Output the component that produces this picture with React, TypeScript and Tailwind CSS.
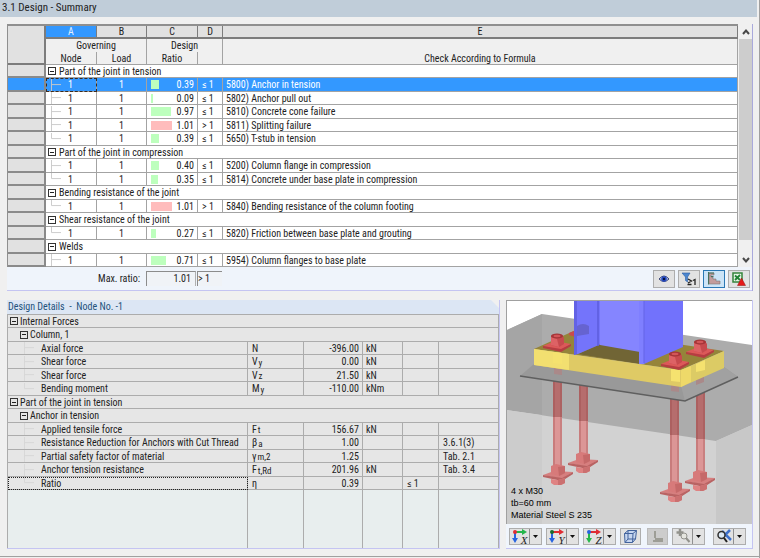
import type { ReactNode } from "react";

type CheckRow = { ratio: string; sign: string; text: string; bar: number; fail?: boolean; selected?: boolean };
type CheckGroup = { title: string; open?: boolean; rows: CheckRow[] };
type DetailRow = { level: number; label: string; symbol?: string; sub?: string; value?: string; unit?: string; limit?: string; note?: string; last?: boolean; focused?: boolean };

const groups: CheckGroup[] = [
    {
        title: "Part of the joint in tension",
        rows: [
            { ratio: "0.39", sign: "≤ 1", text: "5800) Anchor in tension", bar: 8, selected: true },
            { ratio: "0.09", sign: "≤ 1", text: "5802) Anchor pull out", bar: 2 },
            { ratio: "0.97", sign: "≤ 1", text: "5810) Concrete cone failure", bar: 20 },
            { ratio: "1.01", sign: "> 1", text: "5811) Splitting failure", bar: 21, fail: true },
            { ratio: "0.39", sign: "≤ 1", text: "5650) T-stub in tension", bar: 8 },
        ],
    },
    {
        title: "Part of the joint in compression",
        rows: [
            { ratio: "0.40", sign: "≤ 1", text: "5200) Column flange in compression", bar: 8 },
            { ratio: "0.35", sign: "≤ 1", text: "5814) Concrete under base plate in compression", bar: 7 },
        ],
    },
    {
        title: "Bending resistance of the joint",
        rows: [{ ratio: "1.01", sign: "> 1", text: "5840) Bending resistance of the column footing", bar: 21, fail: true }],
    },
    {
        title: "Shear resistance of the joint",
        rows: [{ ratio: "0.27", sign: "≤ 1", text: "5820) Friction between base plate and grouting", bar: 5 }],
    },
    {
        title: "Welds",
        open: true,
        rows: [{ ratio: "0.71", sign: "≤ 1", text: "5954) Column flanges to base plate", bar: 15 }],
    },
];

const details: DetailRow[] = [
    { level: 0, label: "Internal Forces" },
    { level: 1, label: "Column, 1" },
    { level: 2, label: "Axial force", symbol: "N", value: "-396.00", unit: "kN" },
    { level: 2, label: "Shear force", symbol: "V", sub: "y", value: "0.00", unit: "kN" },
    { level: 2, label: "Shear force", symbol: "V", sub: "z", value: "21.50", unit: "kN" },
    { level: 2, label: "Bending moment", symbol: "M", sub: "y", value: "-110.00", unit: "kNm", last: true },
    { level: 0, label: "Part of the joint in tension" },
    { level: 1, label: "Anchor in tension" },
    { level: 2, label: "Applied tensile force", symbol: "F", sub: "t", value: "156.67", unit: "kN" },
    { level: 2, label: "Resistance Reduction for Anchors with Cut Thread", symbol: "β", sub: "a", value: "1.00", note: "3.6.1(3)" },
    { level: 2, label: "Partial safety factor of material", symbol: "γ", sub: "m,2", value: "1.25", note: "Tab. 2.1" },
    { level: 2, label: "Anchor tension resistance", symbol: "F", sub: "t,Rd", value: "201.96", unit: "kN", note: "Tab. 3.4" },
    { level: 2, label: "Ratio", symbol: "η", value: "0.39", limit: "≤ 1", last: true, focused: true },
];

function Toggle({ label }: { label: string }) {
    return (
        <button aria-label={`Collapse ${label}`} className="w-2 h-2 shrink-0 border border-[#333] flex items-center justify-center">
            <span className="block w-1 h-px bg-[#222]"></span>
        </button>
    );
}

function Branch({ last }: { last?: boolean }) {
    return (
        <svg className="w-3 h-full shrink-0" viewBox="0 0 12 14" preserveAspectRatio="none" fill="none" stroke="#c9c9c9" shapeRendering="crispEdges">
            <path d={last ? "M1.5 0V6.5H11" : "M1.5 0V14M1.5 6.5H11"} />
        </svg>
    );
}

function SummaryTable() {
    const cell = "border-r border-b border-[#a3a3a3] p-0";
    const letter = "h-[13px] p-0 border-r border-b-2 border-[#7c7c7c] font-normal";
    return (
        <table className="w-full table-fixed border-separate border-spacing-0 border-t-2 border-l border-[#8f8f8f] bg-white leading-[11px]">
            <colgroup>
                <col className="w-[38px]" />
                <col className="w-[51px]" />
                <col className="w-[50px]" />
                <col className="w-[51px]" />
                <col className="w-[25px]" />
                <col />
            </colgroup>
            <thead className="bg-[#f0f0f0]">
                <tr className="bg-[#e1e1e1]">
                    <td rowSpan={3} className="bg-[#e1e1e1] border-r-2 border-b-2 border-[#7c7c7c] p-0"></td>
                    <th className={`${letter} bg-[#3398ff] text-[#e3f0ff]`}>A</th>
                    <th className={letter}>B</th>
                    <th className={letter}>C</th>
                    <th className={letter}>D</th>
                    <th className={letter}>E</th>
                </tr>
                <tr>
                    <th colSpan={2} className="h-[13px] p-0 font-normal border-r border-[#a3a3a3]">Governing</th>
                    <th colSpan={2} className="h-[13px] p-0 font-normal border-r border-[#a3a3a3]">Design</th>
                    <th rowSpan={2} className={`${cell} font-normal align-bottom`}>Check According to Formula</th>
                </tr>
                <tr>
                    <th className={`${cell} h-[13px] font-normal`}>Node</th>
                    <th className={`${cell} h-[13px] font-normal`}>Load</th>
                    <th className={`${cell} h-[13px] font-normal`}>Ratio</th>
                    <th className={`${cell} h-[13px]`}></th>
                </tr>
            </thead>
            <tbody>
                {groups.flatMap((g) => [
                    <tr key={g.title} className="h-[13px] even:h-[14px]">
                        <td className="bg-[#e1e1e1] border-r-2 border-b-2 border-[#8a8a8a] p-0"></td>
                        <td colSpan={5} className={cell}>
                            <div className="flex items-center gap-[3px] pl-[2px] h-[11px]">
                                <Toggle label={g.title} />
                                <span>{g.title}</span>
                            </div>
                        </td>
                    </tr>,
                    ...g.rows.map((r, i) => (
                        <tr key={g.title + i} className={`h-[13px] even:h-[14px] ${r.selected ? "bg-[#3398ff] text-white" : ""}`}>
                            <td className={`border-r-2 border-b-2 border-[#8a8a8a] p-0 ${r.selected ? "bg-[#3398ff]" : "bg-[#e1e1e1]"}`}></td>
                            <td className={`${cell} ${r.selected ? "outline-1 -outline-offset-1 outline-dashed outline-[#3d2a1c]" : ""}`}>
                                <div className="flex items-center h-3 pl-1">
                                    <Branch last={i === g.rows.length - 1 && !g.open} />
                                    <span className="pl-1.5">1</span>
                                </div>
                            </td>
                            <td className={`${cell} text-center`}>1</td>
                            <td className={cell}>
                                <div className="flex items-center justify-between pl-1 pr-[3px]">
                                    <span className={`h-[9px] ${r.fail ? "bg-[#ffbcbc]" : "bg-[#bdffbd]"}`} style={{ width: r.bar }}></span>
                                    <span>{r.ratio}</span>
                                </div>
                            </td>
                            <td className={`${cell} pl-1`}>{r.sign}</td>
                            <td className={`${cell} pl-[3px]`}>{r.text}</td>
                        </tr>
                    )),
                ])}
            </tbody>
        </table>
    );
}

function ScrollBar() {
    return (
        <div className="w-[13px] ml-px flex flex-col bg-[#f0f0f0]">
            <button aria-label="Scroll up" className="h-[15px] flex items-center justify-center">
                <svg className="w-2 h-2" viewBox="0 0 8 8" fill="none" stroke="#484848" strokeWidth="2"><path d="M1 6L4 2.5L7 6" /></svg>
            </button>
            <div className="flex-1 bg-[#cdcdcd] mb-3"></div>
            <button aria-label="Scroll down" className="h-[15px] flex items-center justify-center">
                <svg className="w-2 h-2" viewBox="0 0 8 8" fill="none" stroke="#484848" strokeWidth="2"><path d="M1 2L4 5.5L7 2" /></svg>
            </button>
        </div>
    );
}

function IconButton({ label, active, children }: { label: string; active?: boolean; children: ReactNode }) {
    return (
        <button aria-label={label} className={`w-[22px] h-[18px] border flex items-center justify-center ${active ? "bg-[#cce4f7] border-[#2b78b4]" : "bg-[#e2e2e2] border-[#adadad]"}`}>
            {children}
        </button>
    );
}

function SummaryFooter() {
    return (
        <div className="flex items-center h-6 bg-[#eff4fb] border-b border-[#c4c4f2] pr-[2px]">
            <span className="w-[139px] pr-1.5 text-right">Max. ratio:</span>
            <output className="w-[50px] h-[15px] leading-[14px] pr-1 text-right border-t border-l border-r border-t-[#8c8c8c] border-l-[#8c8c8c] border-r-[#b0b0b0] bg-[#f0f3f7]">1.01</output>
            <output className="w-[25px] h-[15px] ml-px leading-[14px] border-t border-l border-t-[#8c8c8c] border-l-[#8c8c8c] bg-[#f0f3f7]">&gt; 1</output>
            <div className="ml-auto flex gap-[3px]">
                <IconButton label="Show">
                    <svg className="w-3 h-3" viewBox="0 0 12 12">
                        <path d="M1 6Q6 0 11 6Q6 11 1 6Z" fill="#b9c8f0" stroke="#3a4674" />
                        <circle cx="6" cy="6" r="2.8" fill="#274bc0" />
                        <circle cx="6" cy="6" r="1.2" fill="#06103c" />
                    </svg>
                </IconButton>
                <IconButton label="Filter ratios above 1">
                    <svg className="w-4 h-4 shrink-0" viewBox="0 0 16 16">
                        <path d="M1 2H9L6.500 6V11L4.500 9.500V6Z" fill="#4d87cf" stroke="#2a5ca3" strokeWidth=".6" />
                        <path d="M7 8L10.500 10L7 12M6.500 13.500H10.500M12 9.500L14 8.500V14" fill="none" stroke="#222" strokeWidth="1.300" />
                    </svg>
                </IconButton>
                <IconButton label="Show ratio bars" active>
                    <svg className="w-[14px] h-[14px]" viewBox="0 0 14 14">
                        <path d="M2 1H7V3H4V5H6V7H9V9H13V12H2Z" fill="#c39c9c" stroke="#777" strokeWidth=".6" />
                        <path d="M1.500 0V12.500M1.500 1H7M4 4.500H6.500" stroke="#47705c" fill="none" />
                    </svg>
                </IconButton>
                <IconButton label="Export to Excel">
                    <svg className="w-[14px] h-[14px]" viewBox="0 0 14 14">
                        <rect x="1" y="1" width="9" height="9" fill="#e9f5e6" stroke="#34843b" strokeWidth="1.500" />
                        <path d="M3 3.500L8 8M8 3L3 8" stroke="#238335" strokeWidth="1.800" />
                        <path d="M9.500 6L13.500 13.500H5.500Z" fill="#e51919" stroke="#901010" strokeWidth=".5" />
                    </svg>
                </IconButton>
            </div>
        </div>
    );
}

function DetailsTable() {
    const cell = "border-r border-b border-[#acacac] p-0";
    return (
        <section className="flex-1 flex flex-col border-r border-b border-[#c4c4f2]">
            <h2 className="h-[14px] leading-[14px] pl-px bg-[#dce6f4] text-[#23527c] font-normal [clip-path:polygon(0_0,calc(100%_-_8px)_0,100%_8px,100%_100%,0_100%)]">Design Details&nbsp; -&nbsp; Node No. -1</h2>
            <div className="flex-1 flex">
                <table className="flex-1 w-full h-full table-fixed border-separate border-spacing-0 border-t border-l border-[#acacac] bg-[#e6e6e6] leading-[11px]">
                    <colgroup>
                        <col />
                        <col className="w-14" />
                        <col className="w-[59px]" />
                        <col className="w-10" />
                        <col className="w-9" />
                        <col className="w-[60px]" />
                    </colgroup>
                    <tbody>
                        {details.map((d, i) =>
                            d.level < 2 ? (
                                <tr key={i} className="h-[13px] even:h-[14px]">
                                    <td colSpan={6} className={cell}>
                                        <div className={`flex items-center gap-[2px] h-[11px] ${d.level ? "pl-3" : "pl-[2px]"}`}>
                                            <Toggle label={d.label} />
                                            <span>{d.label}</span>
                                        </div>
                                    </td>
                                </tr>
                            ) : (
                                <tr key={i} className="h-[13px] even:h-[14px]">
                                    <td className={`${cell} ${d.focused ? "outline-1 -outline-offset-1 outline-dotted outline-[#222]" : ""}`}>
                                        <div className="flex items-center h-3 pl-[15px] whitespace-nowrap">
                                            <span className="opacity-50 h-full"><Branch last={d.last} /></span>
                                            <span className="pl-1.5">{d.label}</span>
                                        </div>
                                    </td>
                                    <td className={`${cell} pl-1`}>
                                        <div className="flex items-center h-3">
                                            {d.symbol}
                                            <span className="text-[9px] leading-[9px] pt-[3px] pl-px">{d.sub}</span>
                                        </div>
                                    </td>
                                    <td className={`${cell} pr-[3px] text-right`}>{d.value}</td>
                                    <td className={`${cell} pl-[3px]`}>{d.unit}</td>
                                    <td className={`${cell} pl-1`}>{d.limit}</td>
                                    <td className={`${cell} pl-1`}>{d.note}</td>
                                </tr>
                            ),
                        )}
                        <tr className="bg-[#e8eeee]">
                            {[0, 1, 2, 3, 4, 5].map((n) => (
                                <td key={n} className="border-r border-[#acacac] p-0"></td>
                            ))}
                        </tr>
                    </tbody>
                </table>
            </div>
        </section>
    );
}

function TopBolt({ x, y }: { x: number; y: number }) {
    return (
        <g transform={`translate(${x} ${y})`}>
            <path d="M-14 4L-2 -1L14 2L4 8Z" fill="#dc5959" />
            <path d="M-14 4L4 7L14 2V4L4 10L-14 6Z" fill="#b63d42" />
            <path d="M-6 -6L-2 -8L5 -7L7 -4V2L2 5L-6 3Z" fill="#c74a4e" />
            <path d="M-6 -5L0 -3L2 5L-6 3Z" fill="#dd6265" />
            <ellipse cx="0" cy="-6" rx="6" ry="2.500" fill="#a53538" />
            <ellipse cx="0" cy="-6" rx="3.500" ry="1.200" fill="#d35659" />
        </g>
    );
}

function BottomNut({ x, y }: { x: number; y: number }) {
    return (
        <g transform={`translate(${x} ${y})`}>
            <path d="M-15 1L-4 -3L15 -2L4 5Z" fill="#d67f7f" />
            <path d="M-15 1L4 4L15 -2V0L4 7L-15 3Z" fill="#b96363" />
            <path d="M-7 -8L-2 -10L7 -8V-1L2 2L-7 0Z" fill="#d77a7a" />
            <path d="M0 -7L7 -8V-1L1 2Z" fill="#c56969" />
            <path d="M-7 5L0 6L7 4V9L3 11H-4L-7 9Z" fill="#df8383" />
            <path d="M0 6L7 4V9L3 11H0Z" fill="#cb7070" />
        </g>
    );
}

function Rod({ x, top, split, bottom }: { x: number; top: number; split: number; bottom: number }) {
    return (
        <g>
            <rect x={x - 4} y={top} width="9" height={bottom - top} fill="#dc9696" />
            <rect x={x - 4} y={top} width="2" height={bottom - top} fill="#c87c7c" />
            <rect x={x + 3} y={top} width="2" height={bottom - top} fill="#c98080" />
            <rect x={x - 4} y={top} width="9" height={split - top} fill="#8f4444" fillOpacity=".5" />
        </g>
    );
}

function JointView() {
    return (
        <svg className="block w-full h-full" viewBox="507 301 245 223" preserveAspectRatio="xMidYMid slice" role="img" aria-label="Column base joint">
            <rect x="507" y="301" width="245" height="223" fill="#fff" />
            <path d="M507 330L542 314L752 345V524H507Z" fill="#acacac" />
            <path d="M507 330L542 314V416L507 410Z" fill="#a5a5a5" />
            <path d="M507 410L716 441L752 425V524H507Z" fill="#d2d2d2" />
            <path d="M507 410L542 415V524H507Z" fill="#cccccc" />
            <path d="M716 441L752 425V524H716Z" fill="#c8c8c8" />
            <Rod x={583} top={372} split={421} bottom={455} />
            <Rod x={700} top={372} split={439} bottom={472} />
            <Rod x={557} top={372} split={417} bottom={467} />
            <Rod x={674} top={384} split={435} bottom={484} />
            <BottomNut x={583} y={462} />
            <BottomNut x={700} y={480} />
            <BottomNut x={558} y={474} />
            <BottomNut x={675} y={491} />
            <path d="M520 376L534 364L724 367L738 377L685 401Z" fill="#999" />
            <path d="M681 386L724 367L738 377L685 401Z" fill="#a1a1a1" />
            <path d="M520 376L685 401L738 377" fill="none" stroke="#5f5f5f" strokeWidth="1.500" />
            <path d="M554 368H562V375L554 374ZM671 384H679V392L671 391ZM696 377L704 374V382L696 385Z" fill="#aa8989" />
            <path d="M534 349L578 329L724 351L681 370Z" fill="#95843a" />
            <path d="M578 354L601 344L640 351V364Z" fill="#716535" />
            <path d="M534 349L681 370V387L534 365Z" fill="#dfca65" />
            <path d="M534 349L569 354V370L534 365Z" fill="#f2df70" />
            <path d="M681 370L724 351V368L681 387Z" fill="#dccb65" />
            <path d="M681 370L691 366V382L681 387Z" fill="#eed969" />
            <path d="M553 352L562 353V364L553 363ZM671 369L680 370V382L671 381ZM696 364L705 360V370L696 372Z" fill="#f5e26f" />
            <path d="M569 333L579 329V338L569 335Z" fill="#c94a4e" />
            <path d="M574 301H601V344L578 354L574 355Z" fill="#7474fb" />
            <path d="M574 301H577V354L574 355Z" fill="#6262e5" />
            <path d="M577 326Q583 322 589 326V334L577 336Z" fill="#6663d0" />
            <path d="M600 301H640V352L600 345Z" fill="#8585ff" />
            <path d="M598 301V346" stroke="#5c5cdd" strokeWidth="1.500" />
            <path d="M639 301H683V347L644 364H639Z" fill="#7272fc" />
            <path d="M639 301H644V364H639Z" fill="#7f7fff" />
            <path d="M644 301V363" stroke="#6565e6" />
            <TopBolt x={557} y={342} />
            <TopBolt x={700} y={348} />
            <TopBolt x={675} y={360} />
        </svg>
    );
}

function AxisIcon({ kind }: { kind: "X" | "Y" | "Z" }) {
    const across = kind === "X" ? "#25b64b" : "#df2c32";
    const down = kind === "Z" ? "#25b64b" : "#2764e0";
    return (
        <span className="relative w-4 h-4">
            <svg className="w-4 h-4" viewBox="0 0 16 16">
                <path d="M3 4H11" stroke={across} strokeWidth="2" />
                <path d="M10 1L15 4L10 7Z" fill={across} />
                <path d="M3 4V11" stroke={down} strokeWidth="2" />
                <path d="M0 10H6L3 15Z" fill={down} />
                <circle cx="3" cy="4" r="2" fill={kind === "X" ? "#df2c32" : kind === "Y" ? "#176b2c" : "#2764e0"} />
            </svg>
            <span className="absolute right-0 -bottom-px font-['Liberation_Serif',serif] italic text-[11px] leading-[10px]">{kind}</span>
        </span>
    );
}

function SplitButton({ label, children }: { label: string; children: ReactNode }) {
    return (
        <div className="w-[33px] h-[17px] flex border border-[#adadad] bg-[#e2e2e2]">
            <button aria-label={label} className="flex-1 flex items-center justify-center">{children}</button>
            <button aria-label={`${label} options`} className="w-3 flex items-center justify-center border-l border-[#8f8f8f]">
                <svg className="w-[5px] h-[3px]" viewBox="0 0 5 3"><path d="M0 0H5L2.500 3Z" fill="#111" /></svg>
            </button>
        </div>
    );
}

function ViewToolbar() {
    return (
        <div className="h-6 flex items-center gap-1 pl-[3px] pr-1.5 bg-[#f0f5fc]">
            <SplitButton label="View in X"><AxisIcon kind="X" /></SplitButton>
            <SplitButton label="View in Y"><AxisIcon kind="Y" /></SplitButton>
            <SplitButton label="View in Z"><AxisIcon kind="Z" /></SplitButton>
            <button aria-label="Isometric view" className="w-[21px] h-[17px] border border-[#adadad] bg-[#e2e2e2] flex items-center justify-center">
                <svg className="w-[15px] h-[15px]" viewBox="0 0 15 15" fill="#c6d6f0" stroke="#42639d">
                    <path d="M1.500 4.500L5 1.500H13.500L12.500 10L9.500 13.500H2Z" />
                    <path d="M1.500 4.500H10L13.500 1.500M10 4.500L9.500 13.500M5 1.500V10H12.500M5 10L2 13.500" fill="none" />
                </svg>
            </button>
            <div className="ml-auto flex gap-1">
                <button aria-label="Loads" disabled className="w-[21px] h-[17px] border border-[#bbb] bg-[#cccccc] flex items-center justify-center">
                    <svg className="w-3 h-3" viewBox="0 0 12 12" fill="none" stroke="#8d8d84"><path d="M3 1V8M1 11H11M3 9H11" strokeWidth="1.500" /></svg>
                </button>
                <SplitButton label="Zoom">
                    <svg className="w-4 h-4" viewBox="0 0 16 16" fill="none" stroke="#92928c">
                        <path d="M5 1V8M1.500 4.500H8.500" strokeWidth="2.500" />
                        <circle cx="9" cy="8" r="3" fill="#e5e5df" /><path d="M11 10L14.500 14" strokeWidth="2" />
                    </svg>
                </SplitButton>
            </div>
            <div className="ml-1">
                <SplitButton label="Show all">
                    <svg className="w-4 h-4" viewBox="0 0 16 16" fill="none">
                        <path d="M6 3L15 12M14 2L6 10" stroke="#3d70cc" strokeWidth="2.500" />
                        <circle cx="5.500" cy="7" r="3.500" fill="#dbe8f5" stroke="#303030" strokeWidth="1.500" />
                        <path d="M8 10L11 14" stroke="#222" strokeWidth="2" />
                    </svg>
                </SplitButton>
            </div>
        </div>
    );
}

export default function App() {
    return (
        <main className="min-h-screen flex flex-col bg-[#f0f0f0] text-[#222] font-['Liberation_Sans_Narrow','Roboto_Condensed',Roboto,sans-serif] text-[10px] leading-3 border-r border-[#a0a0a0]">
            <h1 className="h-[17px] mr-[2px] pl-[2px] bg-[#c0cdd9] text-[11px] leading-4 font-normal">3.1 Design - Summary</h1>
            <section className="mt-[7px] ml-[7px] mr-1.5 border-r border-[#a9a9dc]">
                <div className="flex">
                    <div className="flex-1"><SummaryTable /></div>
                    <ScrollBar />
                </div>
                <SummaryFooter />
            </section>
            <div className="flex-1 flex gap-1.5 mt-[9px] mb-[7px] ml-[7px] mr-1.5">
                <DetailsTable />
                <section className="w-[247px] flex flex-col border-r border-b border-[#c4c4f2]">
                    <div className="flex-1 min-h-[224px] relative border-t border-l border-[#a0a0a0]">
                        <div className="absolute inset-0"><JointView /></div>
                        <div className="absolute left-1 bottom-[3px] font-['Liberation_Sans',Arial,sans-serif] text-[9px] leading-3 text-black">
                            <p>4 x M30</p>
                            <p>tb=60 mm</p>
                            <p>Material Steel S 235</p>
                        </div>
                    </div>
                    <ViewToolbar />
                </section>
            </div>
            <div className="h-[2px] border-t border-[#a0a0a0]"></div>
        </main>
    );
}
